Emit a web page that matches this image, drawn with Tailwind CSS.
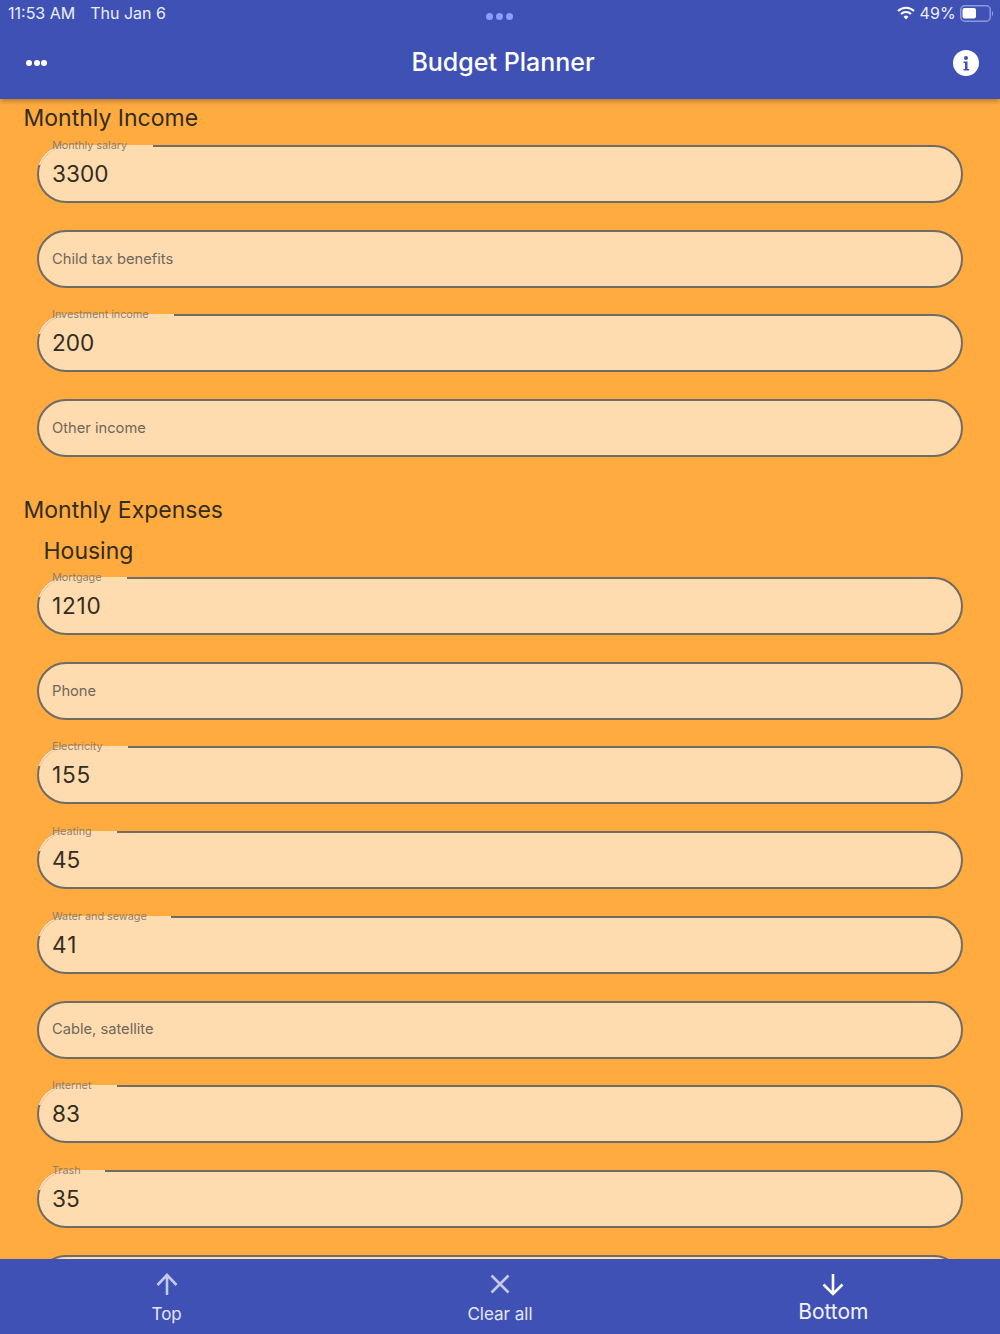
<!DOCTYPE html>
<html lang="en">
<head>
  <meta charset="UTF-8" />
  <meta name="viewport" content="width=device-width, initial-scale=1" />
  <title>Budget Planner</title>
  <script src="https://cdn.jsdelivr.net/npm/@tailwindcss/browser@4"></script>
</head>
<body class="font-['Inter',sans-serif]">
  <div class="h-[1334px] w-[1000px] flex flex-col overflow-hidden bg-[#ffab40]">

    <!-- status bar + app bar -->
    <header class="relative z-10 h-[99px] shrink-0 bg-[#3f51b5] text-white shadow-[0_2px_5px_rgba(0,0,0,0.3)]">
      <div class="h-[26px] pl-[8px] pr-[7px] flex items-center justify-between text-[16px] leading-none">
        <div class="flex gap-[15px] text-[#eceef8]"><span>11:53 AM</span><span>Thu Jan 6</span></div>
        <div class="flex items-center gap-[4px] text-[#eceef8]">
          <svg width="18" height="14" viewBox="0 0 18 14" fill="none" stroke="white" stroke-width="2"><path d="M1 5 A11.5 11.5 0 0 1 17 5"/><path d="M4 8 A7 7 0 0 1 14 8"/><path d="M9 13.5 L6.6 10.8 A3.4 3.4 0 0 1 11.4 10.8 Z" fill="white" stroke="none"/></svg>
          <span class="tracking-[0.2px]">49%</span>
          <svg width="33" height="17" viewBox="0 0 33 17" fill="none"><rect x="0.75" y="0.75" width="29.5" height="15.5" rx="4" stroke="#8d98d6" stroke-width="1.5"/><rect x="2.5" y="3" width="13.5" height="10.5" rx="2" fill="white"/><path d="M32 6 a3 3 0 0 1 0 5 z" fill="#8d98d6"/></svg>
        </div>
      </div>
      <div class="absolute left-[486px] top-[13px] flex gap-[3px]">
        <span class="size-[7px] rounded-full bg-[#8c9eff]"></span><span class="size-[7px] rounded-full bg-[#8c9eff]"></span><span class="size-[7px] rounded-full bg-[#8c9eff]"></span>
      </div>
      <div class="h-[73px] pl-[26px] pr-[21px] flex items-center justify-between">
        <div class="flex gap-[1.5px]">
          <span class="size-[6px] rounded-full bg-white"></span><span class="size-[6px] rounded-full bg-white"></span><span class="size-[6px] rounded-full bg-white"></span>
        </div>
        <h1 class="ml-[6px] text-[25px] font-medium">Budget Planner</h1>
        <svg width="26" height="26" viewBox="0 0 26 26"><circle cx="13" cy="13" r="13" fill="white"/><rect x="11" y="6" width="4" height="4" rx="2" fill="#3f51b5"/><path d="M10.5 11.5h4v7.5h1.5v1.5h-5.5v-1.5h1.5v-6h-1.5z" fill="#3f51b5"/></svg>
      </div>
    </header>

    <main class="flex-1 min-h-0 overflow-hidden text-[#332c20]">
      <h2 class="ml-[23.5px] mt-[4px] h-[30px] text-[23px] leading-[30px]">Monthly Income</h2>
      <div class="mt-[12px] mx-[37px] flex flex-col gap-[26.7px]">
        <div class="relative h-[58px] rounded-[29px] border-2 border-[#716c63] bg-[#ffdcb0] flex items-center pl-[13px] text-[22.6px]">
          <div class="absolute -left-[2px] -top-[2px] h-[20px] w-[116px] overflow-hidden"><div class="h-[58px] w-[200px] rounded-l-[29px] border-l-2 border-t-2 border-[#ffdcb0]"></div></div>
          <span class="absolute left-[13px] top-[-8px] text-[10.8px] leading-[14px] text-[#8f8069]">Monthly salary</span>
          3300
        </div>
        <div class="h-[58px] rounded-[29px] border-2 border-[#716c63] bg-[#ffdcb0] flex items-center pl-[13px] text-[14.7px] text-[#6f675b]">Child tax benefits</div>
        <div class="relative h-[58px] rounded-[29px] border-2 border-[#716c63] bg-[#ffdcb0] flex items-center pl-[13px] text-[22.6px]">
          <div class="absolute -left-[2px] -top-[2px] h-[20px] w-[137px] overflow-hidden"><div class="h-[58px] w-[200px] rounded-l-[29px] border-l-2 border-t-2 border-[#ffdcb0]"></div></div>
          <span class="absolute left-[13px] top-[-8px] text-[10.8px] leading-[14px] text-[#8f8069]">Investment income</span>
          200
        </div>
        <div class="h-[58px] rounded-[29px] border-2 border-[#716c63] bg-[#ffdcb0] flex items-center pl-[13px] text-[14.7px] text-[#6f675b]">Other income</div>
      </div>

      <h2 class="ml-[23.5px] mt-[38px] h-[30px] text-[23px] leading-[30px]">Monthly Expenses</h2>
      <h3 class="ml-[43.5px] mt-[11px] h-[30px] text-[23px] leading-[30px]">Housing</h3>
      <div class="mt-[11px] mx-[37px] flex flex-col gap-[26.7px]">
        <div class="relative h-[58px] rounded-[29px] border-2 border-[#716c63] bg-[#ffdcb0] flex items-center pl-[13px] text-[22.6px] tracking-[0.8px]">
          <div class="absolute -left-[2px] -top-[2px] h-[20px] w-[90px] overflow-hidden"><div class="h-[58px] w-[200px] rounded-l-[29px] border-l-2 border-t-2 border-[#ffdcb0]"></div></div>
          <span class="absolute left-[13px] top-[-8px] text-[10.8px] leading-[14px] tracking-normal text-[#8f8069]">Mortgage</span>
          1210
        </div>
        <div class="h-[58px] rounded-[29px] border-2 border-[#716c63] bg-[#ffdcb0] flex items-center pl-[13px] text-[14.7px] text-[#6f675b]">Phone</div>
        <div class="relative h-[58px] rounded-[29px] border-2 border-[#716c63] bg-[#ffdcb0] flex items-center pl-[13px] text-[22.6px] tracking-[0.8px]">
          <div class="absolute -left-[2px] -top-[2px] h-[20px] w-[91px] overflow-hidden"><div class="h-[58px] w-[200px] rounded-l-[29px] border-l-2 border-t-2 border-[#ffdcb0]"></div></div>
          <span class="absolute left-[13px] top-[-8px] text-[10.8px] leading-[14px] tracking-normal text-[#8f8069]">Electricity</span>
          155
        </div>
        <div class="relative h-[58px] rounded-[29px] border-2 border-[#716c63] bg-[#ffdcb0] flex items-center pl-[13px] text-[22.6px]">
          <div class="absolute -left-[2px] -top-[2px] h-[20px] w-[80px] overflow-hidden"><div class="h-[58px] w-[200px] rounded-l-[29px] border-l-2 border-t-2 border-[#ffdcb0]"></div></div>
          <span class="absolute left-[13px] top-[-8px] text-[10.8px] leading-[14px] text-[#8f8069]">Heating</span>
          45
        </div>
        <div class="relative h-[58px] rounded-[29px] border-2 border-[#716c63] bg-[#ffdcb0] flex items-center pl-[13px] text-[22.6px] tracking-[1px]">
          <div class="absolute -left-[2px] -top-[2px] h-[20px] w-[134px] overflow-hidden"><div class="h-[58px] w-[200px] rounded-l-[29px] border-l-2 border-t-2 border-[#ffdcb0]"></div></div>
          <span class="absolute left-[13px] top-[-8px] text-[10.8px] leading-[14px] tracking-normal text-[#8f8069]">Water and sewage</span>
          41
        </div>
        <div class="h-[58px] rounded-[29px] border-2 border-[#716c63] bg-[#ffdcb0] flex items-center pl-[13px] text-[14.7px] text-[#6f675b]">Cable, satellite</div>
        <div class="relative h-[58px] rounded-[29px] border-2 border-[#716c63] bg-[#ffdcb0] flex items-center pl-[13px] text-[22.6px]">
          <div class="absolute -left-[2px] -top-[2px] h-[20px] w-[80px] overflow-hidden"><div class="h-[58px] w-[200px] rounded-l-[29px] border-l-2 border-t-2 border-[#ffdcb0]"></div></div>
          <span class="absolute left-[13px] top-[-8px] text-[10.8px] leading-[14px] text-[#8f8069]">Internet</span>
          83
        </div>
        <div class="relative h-[58px] rounded-[29px] border-2 border-[#716c63] bg-[#ffdcb0] flex items-center pl-[13px] text-[22.6px]">
          <div class="absolute -left-[2px] -top-[2px] h-[20px] w-[68px] overflow-hidden"><div class="h-[58px] w-[200px] rounded-l-[29px] border-l-2 border-t-2 border-[#ffdcb0]"></div></div>
          <span class="absolute left-[13px] top-[-8px] text-[10.8px] leading-[14px] text-[#8f8069]">Trash</span>
          35
        </div>
        <div class="h-[58px] rounded-[29px] border-2 border-[#716c63] bg-[#ffdcb0]"></div>
      </div>
    </main>

    <!-- bottom nav -->
    <nav class="h-[75px] shrink-0 bg-[#3f51b5] grid grid-cols-3 text-center">
      <div class="flex flex-col items-center pt-[13px] text-[17px] text-[#e4e7f6]">
        <svg width="24" height="24" viewBox="0 0 24 24" fill="none" stroke="#c3c9e9" stroke-width="2.6"><path d="M12 23V3M2.5 13L12 3l9.5 10"/></svg>
        <span class="mt-[6px] leading-[24px]">Top</span>
      </div>
      <div class="flex flex-col items-center pt-[13px] text-[17px] text-[#e4e7f6]">
        <svg width="24" height="24" viewBox="0 0 24 24" fill="none" stroke="#c3c9e9" stroke-width="2.6"><path d="M3.5 3.5l17 17M20.5 3.5l-17 17"/></svg>
        <span class="mt-[6px] leading-[24px]">Clear all</span>
      </div>
      <div class="flex flex-col items-center pt-[13px] text-[21px] text-[#f2f3fb]">
        <svg width="24" height="24" viewBox="0 0 24 24" fill="none" stroke="white" stroke-width="2.6"><path d="M12 2v20M2.5 12.5L12 22l9.5-9.5"/></svg>
        <span class="mt-[4px] leading-[24px]">Bottom</span>
      </div>
    </nav>
  </div>
</body>
</html>
